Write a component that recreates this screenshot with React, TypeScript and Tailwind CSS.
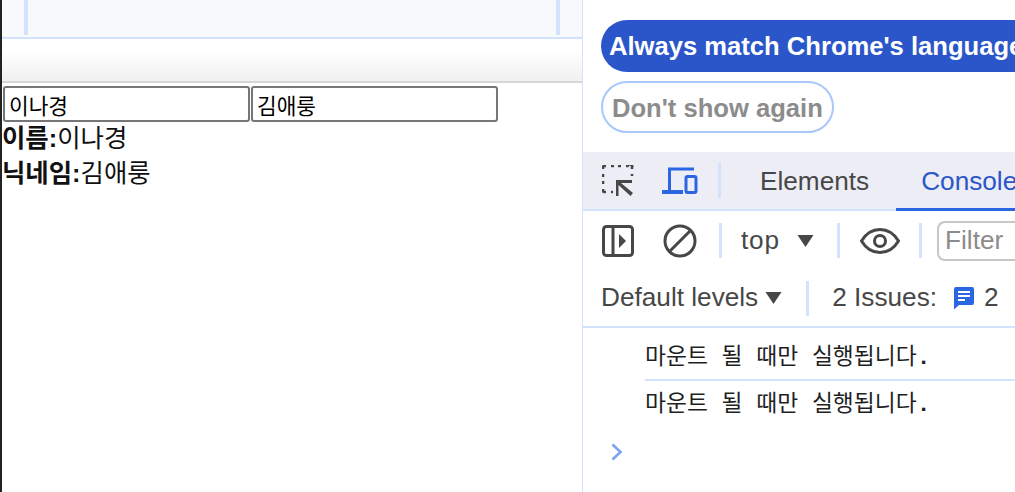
const ui = "font-['Liberation_Sans','Noto_Sans_CJK_KR',sans-serif]";

function Divider({ className }: { className: string }) {
  return <div className={`w-[3px] shrink-0 bg-[#d3e3fd] ${className}`} />;
}

function Caret({ className }: { className: string }) {
  return (
    <svg viewBox="0 0 16 12" className={`shrink-0 ${className}`}>
      <path d="M0 0H16L8 12Z" fill="#474747" />
    </svg>
  );
}

function ConsoleLine({ className }: { className: string }) {
  return (
    <div
      className={`ml-[62px] shrink-0 whitespace-pre font-['Liberation_Mono','Noto_Sans_CJK_KR',monospace] text-[22.8px] text-[#1f1f1f] ${className}`}
    >
      마운트 될 때만 실행됩니다<b>.</b>
    </div>
  );
}

export default function App() {
  return (
    <div className={`flex h-[492px] w-[1015px] overflow-hidden bg-white ${ui}`}>
      {/* Page */}
      <div className="flex w-[583px] shrink-0 border-r border-[#d3e3fd]">
        <div className="w-[2px] shrink-0 bg-[#222222]" />
        <div className="flex min-w-0 flex-1 flex-col">
          <div className="flex h-[37px] shrink-0 bg-[#f7f9fd] pl-[22px] pr-[22px]">
            <div className="h-[35px] w-full border-x-4 border-[#d3e3fd]" />
          </div>
          <div className="h-[46px] shrink-0 border-y-2 border-t-[#d3e3fd] border-b-[#d6d6d6] bg-gradient-to-b from-white from-30% to-[#f0f0f0]" />
          <div className="flex gap-px pl-px pt-[3px]">
            <input
              readOnly
              value="이나경"
              className="h-[36px] w-[247px] rounded-[3px] border-2 border-[#767676] px-[4px] text-[21.4px] text-black outline-none"
            />
            <input
              readOnly
              value="김애룽"
              className="h-[36px] w-[247px] rounded-[3px] border-2 border-[#767676] px-[4px] text-[21.4px] text-black outline-none"
            />
          </div>
          <div className="mt-[-1px] text-[25.4px] leading-[35px] text-[#111111]">
            <div>
              <b>이름:</b>이나경
            </div>
            <div>
              <b>닉네임:</b>김애룽
            </div>
          </div>
        </div>
      </div>

      {/* DevTools */}
      <div className="flex min-w-0 flex-1 flex-col">
        <div className="flex h-[152px] shrink-0 flex-col items-start gap-[9px] pl-[18px] pt-[20px]">
          <div className="flex h-[52px] items-center whitespace-nowrap rounded-[26px] bg-[#2a56c9] pl-[8px] pr-[24px] text-[25.6px] font-bold text-white">
            Always match Chrome's language
          </div>
          <div className="flex h-[52px] items-center whitespace-nowrap rounded-[26px] border-2 border-[#a8c7fa] px-[9px] pt-[2px] text-[25.6px] font-bold text-[#8c8c8c]">
            Don't show again
          </div>
        </div>

        {/* Tab bar */}
        <div className="flex h-[59px] shrink-0 items-center border-b-[2px] border-[#d3e3fd] bg-[#edeef5] pl-[19px]">
          <svg viewBox="0 0 32 32" className="h-[32px] w-[32px] shrink-0" fill="none">
            <path
              d="M1 4V2.5A1.5 1.5 0 0 1 2.5 1H4M9 1h3M16 1h3M24 1h1.5A1.5 1.5 0 0 1 30 2.5V4M30 9v2M1 9v3M1 16v3M1 24v1.5A1.5 1.5 0 0 0 2.5 27H4M9 27h2"
              stroke="#474747"
              strokeWidth="2.6"
            />
            <path d="M14 15H30V18H19L31 28L28.5 31L16.5 20V31H14Z" fill="#474747" />
          </svg>
          <svg viewBox="0 0 36 28" className="ml-[28px] h-[28px] w-[36px] shrink-0" fill="none">
            <path d="M32 2H7.5V24" stroke="#2b65e3" strokeWidth="3" />
            <path d="M0 23H21V27H0Z" fill="#2b65e3" />
            <rect x="24" y="9.5" width="10" height="16" rx="1.5" stroke="#2b65e3" strokeWidth="3" />
          </svg>
          <Divider className="ml-[20px] h-[35px]" />
          <div className="ml-[39px] pt-[2px] text-[26.2px] text-[#474747]">Elements</div>
          <div className="ml-[27px] mb-[-2px] flex h-[57px] flex-1 items-center self-end overflow-hidden whitespace-nowrap border-b-[3px] border-[#2b65e3] pl-[25px] pt-[2px] text-[26.2px] text-[#2a56c9]">
            Console
          </div>
        </div>

        {/* Console toolbar */}
        <div className="flex h-[59px] shrink-0 items-center pl-[19px]">
          <svg viewBox="0 0 32 32" className="h-[32px] w-[32px] shrink-0" fill="none">
            <rect x="1.5" y="1.5" width="29" height="29" rx="3" stroke="#474747" strokeWidth="3" />
            <path d="M11 2V30" stroke="#474747" strokeWidth="3" />
            <path d="M17 9L24 16L17 23Z" fill="#474747" />
          </svg>
          <svg viewBox="0 0 34 34" className="ml-[29px] h-[34px] w-[34px] shrink-0" fill="none">
            <circle cx="17" cy="17" r="15" stroke="#474747" strokeWidth="3" />
            <path d="M6.5 27.5L27.5 6.5" stroke="#474747" strokeWidth="3" />
          </svg>
          <Divider className="ml-[22px] h-[35px]" />
          <div className="ml-[19px] w-[39px] text-[26.2px] tracking-[0.8px] text-[#474747]">top</div>
          <Caret className="ml-[17px] h-[12px] w-[17px]" />
          <Divider className="ml-[23px] h-[35px]" />
          <svg viewBox="0 0 40 26" className="ml-[20px] h-[26px] w-[40px] shrink-0" fill="none">
            <path d="M1.5 13C6 5.5 12.5 1.5 20 1.5S34 5.5 38.5 13C34 20.5 27.5 24.5 20 24.5S6 20.5 1.5 13Z" stroke="#474747" strokeWidth="3" />
            <circle cx="20" cy="13" r="5.5" stroke="#474747" strokeWidth="3" />
          </svg>
          <Divider className="ml-[19px] h-[35px]" />
          <div className="ml-[15px] flex h-[40px] flex-1 items-center rounded-l-[8px] border-y-2 border-l-2 border-[#c7c7c7] pl-[6px] text-[26.2px] text-[#8c8c8c]">
            Filter
          </div>
        </div>

        {/* Levels and issues */}
        <div className="flex h-[58px] shrink-0 items-center border-b-2 border-[#d3e3fd] pl-[18px] text-[26.2px] text-[#474747]">
          <span className="whitespace-nowrap">Default levels</span>
          <Caret className="ml-[7px] h-[12px] w-[17px]" />
          <Divider className="ml-[24px] h-[35px] w-[2px]" />
          <span className="ml-[23px] whitespace-nowrap">2 Issues:</span>
          <svg viewBox="0 0 22 24" className="ml-[16px] h-[24px] w-[22px] shrink-0">
            <path d="M3 1H19A2 2 0 0 1 21 3V17A2 2 0 0 1 19 19H6L1 23.5V3A2 2 0 0 1 3 1Z" fill="#2b65e3" />
            <path d="M5 6H17M5 10H17M5 14H12" stroke="white" strokeWidth="2" />
          </svg>
          <span className="ml-[9px]">2</span>
        </div>

        {/* Console output */}
        <div className="flex flex-1 flex-col">
          <ConsoleLine className="h-[53px] border-b-2 border-[#d3e3fd] pt-[13px]" />
          <ConsoleLine className="h-[46px] pt-[7px]" />
          <svg viewBox="0 0 12 18" className="ml-[28px] mt-[16px] h-[18px] w-[12px] shrink-0" fill="none">
            <path d="M1.5 1.5L9.5 9L1.5 16.5" stroke="#7ba3f5" strokeWidth="2.6" />
          </svg>
        </div>
      </div>
    </div>
  );
}
